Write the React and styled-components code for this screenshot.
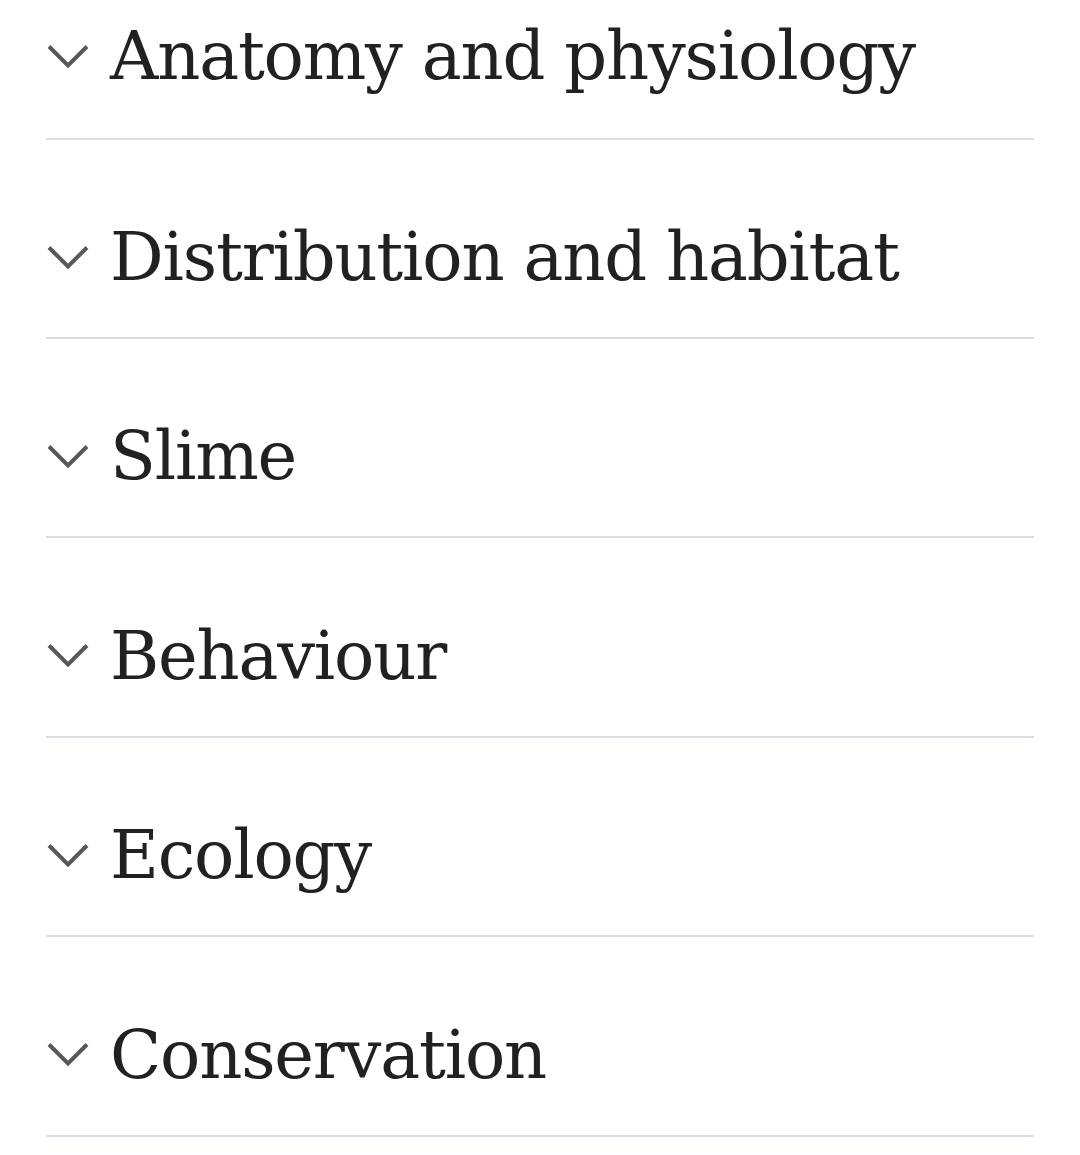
import styled, { createGlobalStyle } from 'styled-components';

const sections = [
  'Anatomy and physiology',
  'Distribution and habitat',
  'Slime',
  'Behaviour',
  'Ecology',
  'Conservation',
];

const GlobalStyle = createGlobalStyle`
  body {
    margin: 0;
    background: #ffffff;
    font-family: "DejaVu Serif", "Liberation Serif", serif;
    color: #202122;
  }
`;

const Chevron = () => (
  <ChevronSvg viewBox="0 0 42 25" width="42" height="25">
    <polyline
      points="2,2.5 21,21.5 40,2.5"
      fill="none"
      stroke="#54595d"
      strokeWidth="4"
    />
  </ChevronSvg>
);

export default function App() {
  return (
    <>
      <GlobalStyle />
      <List>
        {sections.map((title, i) => (
          <Section key={title} $first={i === 0}>
            <Chevron />
            <Heading>{title}</Heading>
          </Section>
        ))}
      </List>
    </>
  );
}

const List = styled.div`
  padding: 0 46px;
`;

const Section = styled.div`
  display: flex;
  align-items: flex-start;
  box-sizing: border-box;
  height: ${(p) => (p.$first ? '139.6px' : '199.4px')};
  padding-top: ${(p) => (p.$first ? '16px' : '77.5px')};
  border-bottom: 2px solid #dadde3;
`;

const ChevronSvg = styled.svg`
  flex: none;
  margin: 27.5px 21px 0 1px;
`;

const Heading = styled.h2`
  margin: 0;
  font-size: 67px;
  line-height: 80px;
  letter-spacing: -1.2px;
  font-weight: 400;
  white-space: nowrap;
`;
